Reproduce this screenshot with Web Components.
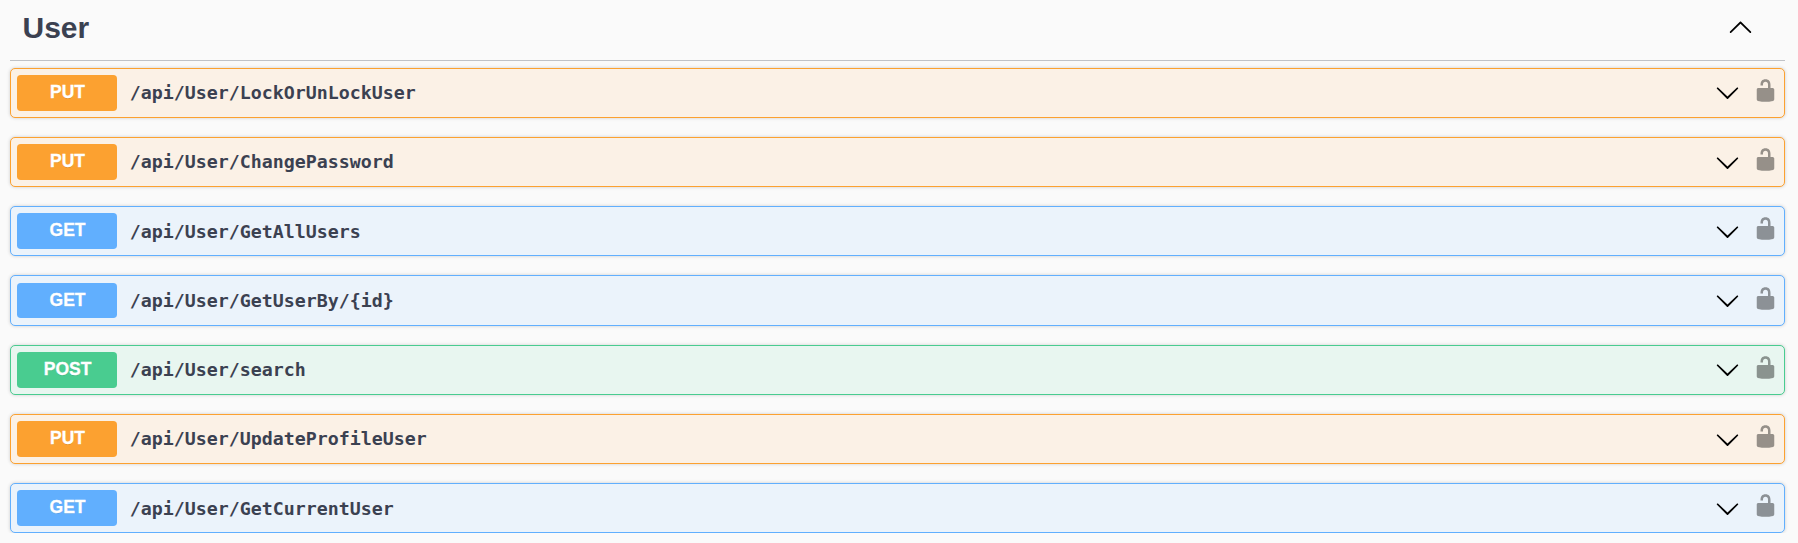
<!DOCTYPE html>
<html lang="en">
<head>
<meta charset="utf-8">
<title>User API</title>
<style>
body { margin: 0; background: #fafafa; overflow: hidden; font-family: "Liberation Sans", Arial, sans-serif; color: #3b4151; }
</style>
</head>
<body>
<api-section name="User">
  <api-operation method="put">/api/User/LockOrUnLockUser</api-operation>
  <api-operation method="put">/api/User/ChangePassword</api-operation>
  <api-operation method="get">/api/User/GetAllUsers</api-operation>
  <api-operation method="get">/api/User/GetUserBy/{id}</api-operation>
  <api-operation method="post">/api/User/search</api-operation>
  <api-operation method="put">/api/User/UpdateProfileUser</api-operation>
  <api-operation method="get">/api/User/GetCurrentUser</api-operation>
</api-section>
<script>
const shapes = {
  down: 'M17.418 6.109c.272-.268.709-.268.979 0s.271.701 0 .969l-7.908 7.83c-.27.268-.707.268-.979 0l-7.908-7.83c-.27-.268-.27-.701 0-.969.271-.268.709-.268.979 0L10 13.25l7.418-7.141z',
  up: 'M17.418 14.908c.272.268.709.268.979 0s.271-.701 0-.969l-7.908-7.83c-.27-.268-.707-.268-.979 0l-7.908 7.83c-.27.268-.27.701 0 .969.271.268.709.268.979 0L10 7.767l7.418 7.141z',
  unlocked: 'M15.8 8H14V5.6C14 2.703 12.665 1 10 1 7.334 1 6 2.703 6 5.6V6h2v-.801C8 3.754 8.797 3 10 3c1.203 0 2 .754 2 2.199V8H4c-.553 0-1 .646-1 1.199V17c0 .549.428 1.139.951 1.307l1.197.387C5.672 18.861 6.55 19 7.1 19h5.8c.549 0 1.428-.139 1.951-.307l1.196-.387c.524-.167.953-.757.953-1.306V9.199C17 8.646 16.352 8 15.8 8z'
};

class ApiIcon extends HTMLElement {
  connectedCallback() {
    this.attachShadow({ mode: 'open' }).innerHTML = `
      <style>
        :host { display: block; flex: none; width: 25px; height: 25px; color: #000; }
        svg { display: block; width: 100%; height: 100%; fill: currentColor; }
      </style>
      <svg viewBox="0 0 20 20" aria-hidden="true"><path d="${shapes[this.getAttribute('shape')]}"/></svg>`;
  }
}
customElements.define('api-icon', ApiIcon);

class ApiOperation extends HTMLElement {
  connectedCallback() {
    const method = this.getAttribute('method');
    this.attachShadow({ mode: 'open' }).innerHTML = `
      <style>
        :host { display: flex; align-items: center; box-sizing: border-box; height: 50.3px; padding: 0 6.25px;
          border: 1px solid var(--accent); border-radius: 5px; background: var(--tint);
          box-shadow: 0 0 3.75px rgba(0,0,0,.19); }
        :host([method=put]) { --accent: #fca130; --tint: #fbf1e6; }
        :host([method=get]) { --accent: #61affe; --tint: #ebf3fb; }
        :host([method=post]) { --accent: #49cc90; --tint: #e8f6f0; }
        .method { flex: none; width: 100px; height: 35.8px; line-height: 34.5px; border-radius: 3.75px; background: var(--accent);
          color: #fff; font-size: 17.5px; font-weight: 700; text-align: center; text-shadow: 0 1.25px 0 rgba(0,0,0,.1);
          -webkit-text-stroke: .3px #fff; text-indent: .6px; }
        .path { flex: 1; padding: .6px 0 0 12.5px; line-height: 24px; color: #3b4151;
          font-family: Consolas, "DejaVu Sans Mono", monospace; font-size: 18.27px; font-weight: 600; }
        .lock { opacity: .4; margin: -5px .2px 0 12.6px; }
      </style>
      <span class="method">${method.toUpperCase()}</span>
      <span class="path"><slot></slot></span>
      <api-icon shape="down"></api-icon>
      <api-icon class="lock" shape="unlocked"></api-icon>`;
  }
}
customElements.define('api-operation', ApiOperation);

class ApiSection extends HTMLElement {
  connectedCallback() {
    this.attachShadow({ mode: 'open' }).innerHTML = `
      <style>
        :host { display: block; padding: 0 13px 0 10px; }
        header { display: flex; align-items: center; justify-content: space-between; box-sizing: border-box; height: 61px;
          padding: 0 32px 5px 12.5px; border-bottom: 1px solid rgba(59,65,81,.3); }
        header api-icon { margin-bottom: 1.4px; }
        h3 { margin: 0; font-size: 30px; line-height: 36px; font-weight: 700; color: #3b4151; }
        .list { display: flex; flex-direction: column; gap: 18.95px; padding-top: 6.7px; }
      </style>
      <header><h3>${this.getAttribute('name')}</h3><api-icon shape="up"></api-icon></header>
      <div class="list"><slot></slot></div>`;
  }
}
customElements.define('api-section', ApiSection);
</script>
</body>
</html>
